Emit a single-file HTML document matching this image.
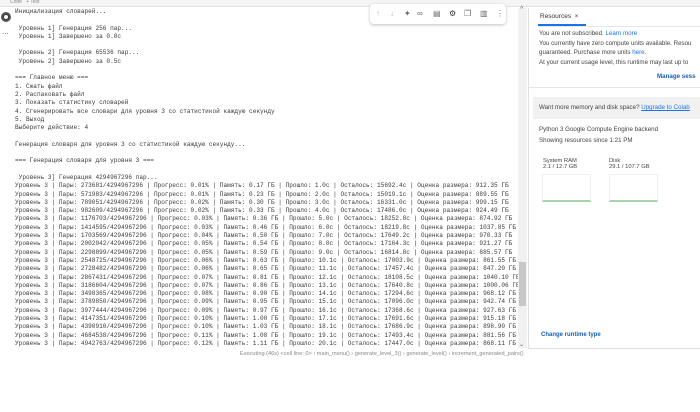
<!DOCTYPE html>
<html><head><meta charset="utf-8"><style>
*{margin:0;padding:0;box-sizing:border-box}
body{width:700px;height:412px;overflow:hidden;background:#fff;position:relative;font-family:"Liberation Sans",sans-serif}
.top{position:absolute;left:0;top:0;width:700px;height:7px;background:#f5f5f5;border-bottom:1px solid #e4e4e4;font-size:5px;color:#888;padding-left:10px;line-height:5px}
pre{position:absolute;left:15px;top:8px;font-family:"Liberation Mono",monospace;font-size:6.1px;line-height:8.3px;color:#3a3a3a;white-space:pre;width:503px;overflow:hidden}
.run{position:absolute;left:1px;top:12px;width:10px;height:10px;border-radius:50%;background:#333;border:2px solid #555}
.run:after{content:"";position:absolute;left:1px;top:1px;width:4px;height:4px;border-radius:50%;background:#fff}
.dots{position:absolute;left:2px;top:27px;font-size:8px;color:#555;letter-spacing:0}
.tb{position:absolute;left:370px;top:4px;width:136px;height:20px;background:#fff;border-radius:4px;box-shadow:0 1px 3px rgba(0,0,0,.25);font-size:8px;color:#666}
.tb span{position:absolute;top:5px}
.sbar{position:absolute;left:518px;top:8px;width:9px;height:340px;background:#f1f1f1}
.thumb{position:absolute;left:519px;top:262px;width:7px;height:44px;background:#c8c8c8}
.rp{position:absolute;left:528px;top:8px;width:172px;height:341px;background:#fff;border-left:1px solid #e0e0e0;border-bottom:1px solid #e0e0e0;font-size:6.2px;color:#444}
.rp div{position:absolute;white-space:nowrap}
.status{position:absolute;left:240px;top:351px;font-size:5.6px;color:#888;white-space:nowrap}
.chart{position:absolute;width:49px;height:28px;border:1px solid #eee;border-bottom:2px solid #a9d3a9}
</style></head><body>
<div class="top">Code &nbsp; + Text</div>
<div class="run"></div>
<div class="dots">...</div>
<pre>Инициализация словарей...

 Уровень 1] Генерация 256 пар...
 Уровень 1] Завершено за 0.0с

 Уровень 2] Генерация 65536 пар...
 Уровень 2] Завершено за 0.5с

=== Главное меню ===
1. Сжать файл
2. Распаковать файл
3. Показать статистику словарей
4. Сгенерировать все словари для уровня 3 со статистикой каждую секунду
5. Выход
Выберите действие: 4

Генерация словаря для уровня 3 со статистикой каждую секунду...

=== Генерация словаря для уровня 3 ===

 Уровень 3] Генерация 4294967296 пар...
Уровень 3 | Пары: 273681/4294967296 | Прогресс: 0.01% | Память: 0.17 ГБ | Прошло: 1.0с | Осталось: 15692.4с | Оценка размера: 912.35 ГБ
Уровень 3 | Пары: 571983/4294967296 | Прогресс: 0.01% | Память: 0.23 ГБ | Прошло: 2.0с | Осталось: 15019.1с | Оценка размера: 889.55 ГБ
Уровень 3 | Пары: 789051/4294967296 | Прогресс: 0.02% | Память: 0.30 ГБ | Прошло: 3.0с | Осталось: 16331.0с | Оценка размера: 999.15 ГБ
Уровень 3 | Пары: 982609/4294967296 | Прогресс: 0.02% | Память: 0.33 ГБ | Прошло: 4.0с | Осталось: 17486.0с | Оценка размера: 924.49 ГБ
Уровень 3 | Пары: 1176703/4294967296 | Прогресс: 0.03% | Память: 0.36 ГБ | Прошло: 5.0с | Осталось: 18252.8с | Оценка размера: 874.92 ГБ
Уровень 3 | Пары: 1414595/4294967296 | Прогресс: 0.03% | Память: 0.46 ГБ | Прошло: 6.0с | Осталось: 18219.8с | Оценка размера: 1037.85 ГБ
Уровень 3 | Пары: 1703569/4294967296 | Прогресс: 0.04% | Память: 0.50 ГБ | Прошло: 7.0с | Осталось: 17649.2с | Оценка размера: 970.33 ГБ
Уровень 3 | Пары: 2002042/4294967296 | Прогресс: 0.05% | Память: 0.54 ГБ | Прошло: 8.0с | Осталось: 17164.3с | Оценка размера: 921.27 ГБ
Уровень 3 | Пары: 2298899/4294967296 | Прогресс: 0.05% | Память: 0.59 ГБ | Прошло: 9.0с | Осталось: 16814.8с | Оценка размера: 885.57 ГБ
Уровень 3 | Пары: 2548725/4294967296 | Прогресс: 0.06% | Память: 0.63 ГБ | Прошло: 10.1с | Осталось: 17003.9с | Оценка размера: 861.55 ГБ
Уровень 3 | Пары: 2728482/4294967296 | Прогресс: 0.06% | Память: 0.65 ГБ | Прошло: 11.1с | Осталось: 17457.4с | Оценка размера: 847.20 ГБ
Уровень 3 | Пары: 2867431/4294967296 | Прогресс: 0.07% | Память: 0.81 ГБ | Прошло: 12.1с | Осталось: 18108.5с | Оценка размера: 1040.10 ГБ
Уровень 3 | Пары: 3186604/4294967296 | Прогресс: 0.07% | Память: 0.86 ГБ | Прошло: 13.1с | Осталось: 17640.8с | Оценка размера: 1000.06 ГБ
Уровень 3 | Пары: 3498365/4294967296 | Прогресс: 0.08% | Память: 0.90 ГБ | Прошло: 14.1с | Осталось: 17294.6с | Оценка размера: 968.12 ГБ
Уровень 3 | Пары: 3789850/4294967296 | Прогресс: 0.09% | Память: 0.95 ГБ | Прошло: 15.1с | Осталось: 17096.0с | Оценка размера: 942.74 ГБ
Уровень 3 | Пары: 3977444/4294967296 | Прогресс: 0.09% | Память: 0.97 ГБ | Прошло: 16.1с | Осталось: 17368.6с | Оценка размера: 927.63 ГБ
Уровень 3 | Пары: 4147351/4294967296 | Прогресс: 0.10% | Память: 1.00 ГБ | Прошло: 17.1с | Осталось: 17691.6с | Оценка размера: 915.18 ГБ
Уровень 3 | Пары: 4390910/4294967296 | Прогресс: 0.10% | Память: 1.03 ГБ | Прошло: 18.1с | Осталось: 17686.9с | Оценка размера: 898.90 ГБ
Уровень 3 | Пары: 4684538/4294967296 | Прогресс: 0.11% | Память: 1.08 ГБ | Прошло: 19.1с | Осталось: 17493.4с | Оценка размера: 881.56 ГБ
Уровень 3 | Пары: 4942763/4294967296 | Прогресс: 0.12% | Память: 1.11 ГБ | Прошло: 20.1с | Осталось: 17447.0с | Оценка размера: 868.11 ГБ</pre>
<div class="tb"><span style="left:6px;color:#bbb">↑</span><span style="left:20px;color:#bbb">↓</span><span style="left:34px">✦</span><span style="left:47px">∞</span><span style="left:63px">▤</span><span style="left:79px;color:#333">⚙</span><span style="left:94px">❐</span><span style="left:110px">▥</span><span style="left:126px">⋮</span></div>
<div class="sbar"></div><div class="thumb"></div>
<div style="position:absolute;left:520px;top:6px;font-size:7px;color:#666">^</div>
<div style="position:absolute;left:519px;top:341px;font-size:6px;color:#666">⌄</div>
<div class="rp">
<div style="left:11px;top:5px;font-size:6.5px;color:#333">Resources &nbsp;×</div>
<div style="left:9px;top:16px;width:48px;height:1.5px;background:#1a73e8"></div>
<div style="left:9px;top:18px;width:163px;height:1px;background:#e6e6e6"></div>
<div style="left:10px;top:22px">You are not subscribed. <span style="color:#1a73e8">Learn more</span></div>
<div style="left:10px;top:32px">You currently have zero compute units available. Resou</div>
<div style="left:10px;top:41px">guaranteed. Purchase more units <span style="color:#1a73e8">here</span>.</div>
<div style="left:10px;top:51px">At your current usage level, this runtime may last up to</div>
<div style="left:128px;top:65px;color:#1a5fb4;font-weight:bold">Manage sess</div>
<div style="left:0;top:79px;width:172px;height:1px;background:#e6e6e6"></div>
<div style="left:4px;top:89px;width:168px;height:22px;background:#f1f1f1"></div>
<div style="left:10px;top:96px">Want more memory and disk space? <span style="color:#1a73e8;text-decoration:underline">Upgrade to Colab</span></div>
<div style="left:10px;top:118px">Python 3 Google Compute Engine backend</div>
<div style="left:10px;top:129px">Showing resources since 1:21 PM</div>
<div style="left:14px;top:150px;font-size:5.8px">System RAM<br>2.1 / 12.7 GB</div>
<div style="left:80px;top:150px;font-size:5.8px">Disk<br>29.1 / 107.7 GB</div>
<div class="chart" style="left:13px;top:166px"></div>
<div class="chart" style="left:80px;top:166px"></div>
<div style="left:12px;top:324px;color:#1a5fb4;font-weight:bold;font-size:6px">Change runtime type</div>
</div>
<div class="status">Executing (46s) &lt;cell line: 0&gt; › main_menu() › generate_level_3() › generate_level() › increment_generated_pairs()</div>
</body></html>
